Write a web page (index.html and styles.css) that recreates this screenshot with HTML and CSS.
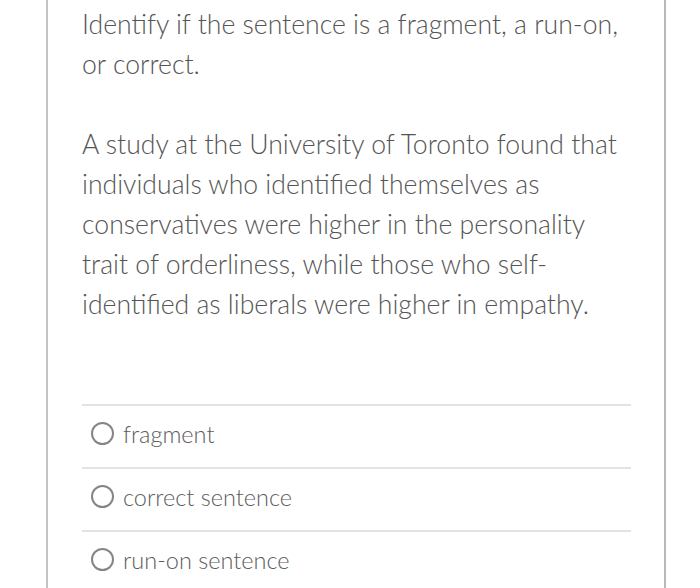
FILE: index.html
```html
<!DOCTYPE html>
<html>
<head>
<meta charset="utf-8">
<link rel="stylesheet" href="styles.css">
</head>
<body>
<div class="card">
  <p class="prompt">Identify if the sentence is a fragment, a run-on, or correct.</p>
  <p class="passage">A study at the University of Toronto found that individuals who identified themselves as conservatives were higher in the personality trait of orderliness, while those who self-identified as liberals were higher in empathy.</p>
  <div class="options">
    <label class="option"><span class="radio"></span><span class="label">fragment</span></label>
    <label class="option"><span class="radio"></span><span class="label">correct sentence</span></label>
    <label class="option"><span class="radio"></span><span class="label">run-on sentence</span></label>
  </div>
</div>
</body>
</html>
```

FILE: styles.css
```css
html, body {
  margin: 0;
  padding: 0;
  background: #fff;
}
body {
  font-family: Lato, "Noto Sans", sans-serif;
  font-weight: 300;
  color: #555;
}
.card {
  margin-left: 46px;
  width: 620px;
  min-height: 588px;
  box-sizing: border-box;
  border-left: 2px solid #c4c4c4;
  border-right: 2px solid #b8b8b8;
  padding: 4px 32px 0 34px;
}
.prompt, .passage {
  margin: 0;
  font-size: 26.6px;
  line-height: 40px;
  width: 545px;
}
.passage {
  margin-top: 40px;
}
.options {
  margin-top: 80px;
  width: 549px;
}
.option {
  display: flex;
  align-items: center;
  height: 63px;
  border-top: 2px solid #e3e3e3;
  box-sizing: border-box;
  padding-left: 9px;
  padding-bottom: 6px;
  gap: 9px;
}
.radio {
  width: 19px;
  height: 19px;
  border: 2px solid #858585;
  border-radius: 50%;
  flex: none;
}
.label {
  font-size: 23.5px;
  color: #5c5c5c;
}
```
